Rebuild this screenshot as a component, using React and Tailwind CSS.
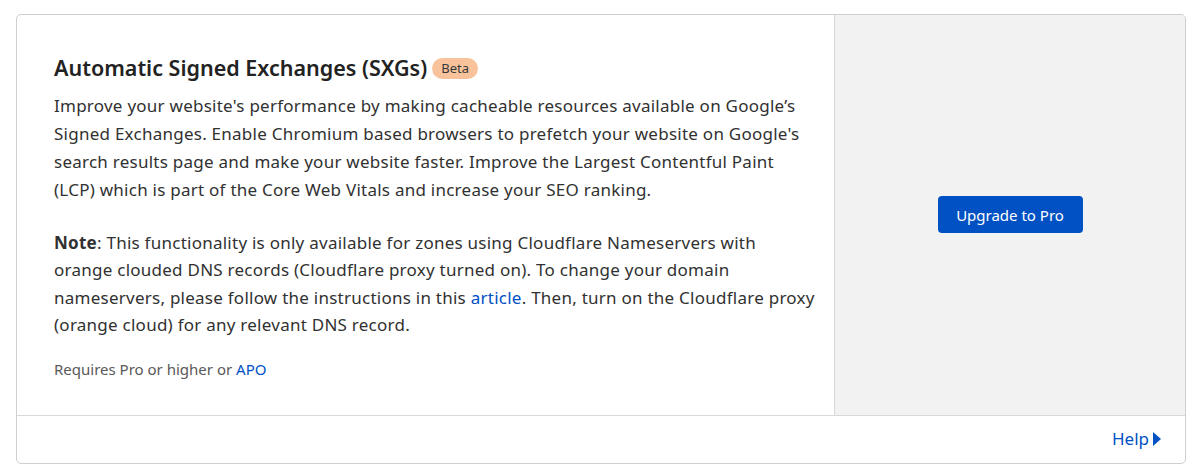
export default function App() {
  return (
    <div className="min-h-screen bg-white pt-[14px] pl-4 pr-[14px] font-['Noto_Sans',sans-serif] text-[#313131]">
      <div className="border border-[#cfcfcf] rounded-[5px] overflow-hidden">
        <div className="flex border-b border-[#d9d9d9]">
          <div className="flex-1 min-w-0 pl-[37px] pr-[12px] pt-[39px] pb-[36px]">
            <h2 className="flex items-center gap-[5px] text-[21.5px] leading-7 font-semibold text-[#222]">
              Automatic Signed Exchanges (SXGs)
              <span className="flex h-[21px] items-center rounded-full bg-[#f8c39b] px-[9px] text-[13px] font-normal text-[#36393a]">
                Beta
              </span>
            </h2>
            <p className="mt-[10px] whitespace-nowrap text-[17px] tracking-[0.25px] leading-7">
              Improve your website's performance by making cacheable resources available on Google’s
              <br />
              Signed Exchanges. Enable Chromium based browsers to prefetch your website on Google's
              <br />
              search results page and make your website faster. Improve the Largest Contentful Paint
              <br />
              (LCP) which is part of the Core Web Vitals and increase your SEO ranking.
            </p>
            <p className="mt-[25px] whitespace-nowrap text-[17px] tracking-[0.25px] leading-[27.4px]">
              <b className="font-bold">Note</b>: This functionality is only available for zones using
              Cloudflare Nameservers with
              <br />
              orange clouded DNS records (Cloudflare proxy turned on). To change your domain
              <br />
              nameservers, please follow the instructions in this{" "}
              <a href="#" className="text-[#0051c3]">article</a>. Then, turn on the Cloudflare proxy
              <br />
              (orange cloud) for any relevant DNS record.
            </p>
            <p className="mt-[20px] text-[15px] leading-5 text-[#595959]">
              Requires Pro or higher or <a href="#" className="text-[#0051c3]">APO</a>
            </p>
          </div>
          <div className="w-[351px] shrink-0 border-l border-[#d9d9d9] bg-[#f2f2f2] flex items-center justify-center">
            <button className="h-[37px] w-[145px] rounded-[4px] bg-[#0051c3] text-[15px] text-white">
              Upgrade to Pro
            </button>
          </div>
        </div>
        <div className="h-[47px] flex items-center justify-end pr-6">
          <a href="#" className="flex items-center gap-1 text-[17px] text-[#0051c3]">
            Help
            <svg width="8" height="14" viewBox="0 0 8 14" fill="currentColor">
              <path d="M0 0 L8 7 L0 14 Z" />
            </svg>
          </a>
        </div>
      </div>
    </div>
  );
}
